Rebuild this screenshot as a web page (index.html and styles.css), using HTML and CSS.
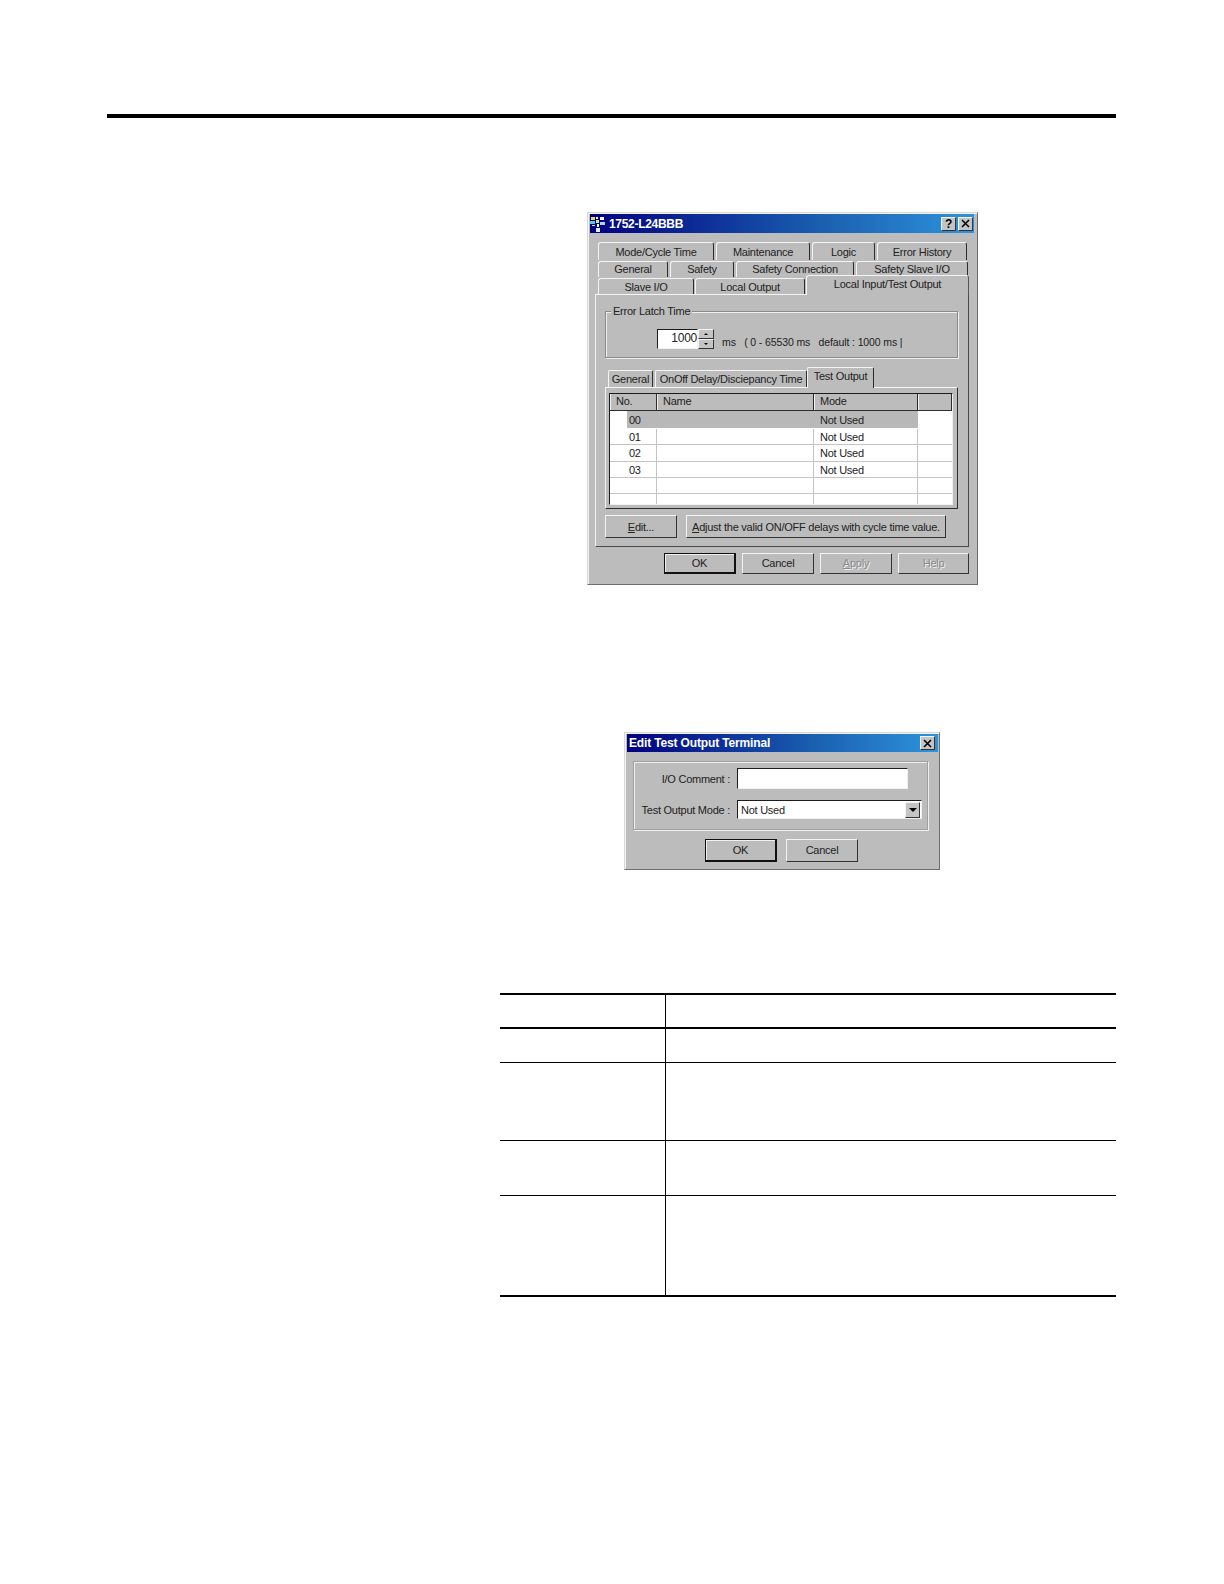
FILE: index.html
```html
<!DOCTYPE html>
<html lang="en">
<head>
<meta charset="utf-8">
<title>Edit Test Output Terminal</title>
<link rel="stylesheet" href="styles.css">
</head>
<body>
<main class="page">
  <div class="rule"></div>

  <section class="dialog dialog-main">
    <header class="titlebar">
      <svg class="app-icon" viewBox="0 0 16 16" width="16" height="16" aria-hidden="true">
        <rect x="1" y="1" width="4" height="3" fill="#e6d84a"/>
        <rect x="6" y="1" width="2" height="2" fill="#ffffff"/>
        <rect x="10" y="1" width="4" height="3" fill="#f2f2f2"/>
        <rect x="0" y="5" width="5" height="3" fill="#58c8e0"/>
        <rect x="6" y="4" width="3" height="3" fill="#d8e880"/>
        <rect x="10" y="6" width="5" height="3" fill="#b8d0e8"/>
        <rect x="2" y="9" width="3" height="1" fill="#e0e0e0"/>
        <rect x="7" y="8" width="2" height="3" fill="#ffffff"/>
        <rect x="6" y="12" width="4" height="4" fill="#e8e8e8"/>
      </svg>
      <h1 class="title title-main">1752-L24BBB</h1>
      <span class="caption-btn caption-help">?</span>
      <span class="caption-btn caption-close">
        <svg viewBox="0 0 9 9" width="9" height="9" aria-hidden="true"><path d="M1 1 L8 8 M8 1 L1 8" stroke="#000" stroke-width="1.6"/></svg>
      </span>
    </header>

    <div class="tabs">
      <div class="tab-row tab-row-a">
        <span class="tab">Mode/Cycle Time</span>
        <span class="tab">Maintenance</span>
        <span class="tab">Logic</span>
        <span class="tab">Error History</span>
      </div>
      <div class="tab-row tab-row-b">
        <span class="tab">General</span>
        <span class="tab">Safety</span>
        <span class="tab">Safety Connection</span>
        <span class="tab">Safety Slave I/O</span>
      </div>
      <div class="tab-row tab-row-c">
        <span class="tab">Slave I/O</span>
        <span class="tab">Local Output</span>
        <span class="tab tab-active">Local Input/Test Output</span>
      </div>
    </div>

    <div class="panel">
      <div class="group group-latch">
        <span class="legend">Error Latch Time</span>
        <div class="spinner">
          <span class="spin-input">1000</span>
          <span class="spin-btns">
            <span class="spin-btn"><i class="arrow-up"></i></span>
            <span class="spin-btn"><i class="arrow-down"></i></span>
          </span>
        </div>
        <span class="range">ms   ( 0 - 65530 ms   default : 1000 ms |</span>
      </div>

      <div class="subtabs">
        <span class="subtab subtab-general">General</span>
        <span class="subtab subtab-delay">OnOff Delay/Disciepancy Time</span>
        <span class="subtab subtab-active">Test Output</span>
      </div>

      <div class="subpanel">
        <div class="list">
          <div class="list-head">
            <span class="hcell">No.</span>
            <span class="hcell">Name</span>
            <span class="hcell">Mode</span>
            <span class="hcell"></span>
          </div>
          <div class="row row-selected row-h18">
            <span class="cell cell-no"><i class="sel-gap"></i>00</span>
            <span class="cell"></span>
            <span class="cell">Not Used</span>
            <span class="cell cell-end"></span>
          </div>
          <div class="row row-h16">
            <span class="cell cell-no"><i class="sel-gap"></i>01</span>
            <span class="cell"></span>
            <span class="cell">Not Used</span>
            <span class="cell cell-end"></span>
          </div>
          <div class="row row-h17">
            <span class="cell cell-no"><i class="sel-gap"></i>02</span>
            <span class="cell"></span>
            <span class="cell">Not Used</span>
            <span class="cell cell-end"></span>
          </div>
          <div class="row row-h16">
            <span class="cell cell-no"><i class="sel-gap"></i>03</span>
            <span class="cell"></span>
            <span class="cell">Not Used</span>
            <span class="cell cell-end"></span>
          </div>
          <div class="row row-h16">
            <span class="cell"></span><span class="cell"></span><span class="cell"></span><span class="cell cell-end"></span>
          </div>
          <div class="row row-last">
            <span class="cell"></span><span class="cell"></span><span class="cell"></span><span class="cell cell-end"></span>
          </div>
        </div>
      </div>

      <div class="panel-actions">
        <span class="btn btn-edit"><span><u>E</u>dit...</span></span>
        <span class="btn btn-adjust"><span><u>A</u>djust the valid ON/OFF delays with cycle time value.</span></span>
      </div>
    </div>

    <div class="dialog-actions">
      <span class="btn btn-default btn-72">OK</span>
      <span class="btn btn-72">Cancel</span>
      <span class="btn btn-72 btn-disabled"><span><u>A</u>pply</span></span>
      <span class="btn btn-71 btn-disabled">Help</span>
    </div>
  </section>

  <section class="dialog dialog-edit">
    <header class="titlebar titlebar-edit">
      <h2 class="title title-edit">Edit Test Output Terminal</h2>
      <span class="caption-btn caption-close">
        <svg viewBox="0 0 9 9" width="9" height="9" aria-hidden="true"><path d="M1 1 L8 8 M8 1 L1 8" stroke="#000" stroke-width="1.6"/></svg>
      </span>
    </header>
    <div class="group group-edit">
      <label class="field-label">I/O Comment :</label>
      <span class="text-input"></span>
      <label class="field-label">Test Output Mode :</label>
      <span class="select">
        <span class="select-value">Not Used</span>
        <span class="select-btn"><i class="arrow-down arrow-big"></i></span>
      </span>
    </div>
    <div class="edit-actions">
      <span class="btn btn-default btn-72 btn-tall">OK</span>
      <span class="btn btn-72 btn-tall">Cancel</span>
    </div>
  </section>

  <table class="data-table">
    <tbody>
      <tr class="tr-head"><td class="td-first"></td><td></td></tr>
      <tr class="tr-1"><td class="td-first"></td><td></td></tr>
      <tr class="tr-2"><td class="td-first"></td><td></td></tr>
      <tr class="tr-3"><td class="td-first"></td><td></td></tr>
      <tr class="tr-4"><td class="td-first"></td><td></td></tr>
    </tbody>
  </table>
</main>
</body>
</html>
```

FILE: styles.css
```css
* { box-sizing: border-box; }

html, body {
  margin: 0;
  padding: 0;
  background: #fff;
}

.page {
  width: 1224px;
  height: 1584px;
  padding-top: 114px;
  overflow: hidden;
  font-family: "Liberation Sans", Arial, sans-serif;
  font-size: 11px;
  letter-spacing: -0.25px;
  color: #222;
}

.rule {
  height: 4px;
  width: 1009px;
  margin-left: 107px;
  background: #000;
}

/* Dialog frames */
.dialog {
  background: #bcbcbc;
  border: 1px solid;
  border-color: #d8d8d8 #6e6e6e #6e6e6e #d8d8d8;
  box-shadow: inset 1px 1px 0 #f2f2f2;
}

.dialog-main {
  width: 391px;
  height: 373px;
  margin: 94px 0 0 587px;
  padding: 1px 3px 0 2px;
}

.dialog-edit {
  width: 316px;
  height: 138px;
  margin: 147px 0 0 624px;
  padding: 1px 0 0 2px;
}

/* Title bars */
.titlebar {
  display: flex;
  align-items: center;
  height: 19px;
  padding-right: 1px;
  background: linear-gradient(90deg, #000080 0%, #1a5fb0 60%, #2e93dc 100%);
  color: #fff;
}

.titlebar-edit {
  height: 18px;
  width: 311px;
  padding-right: 3px;
}

.app-icon {
  flex: none;
  margin-right: 3px;
}

.title {
  flex: 1;
  margin: 0;
  font-size: 12px;
  font-weight: 700;
  line-height: 1;
}

.title-main { letter-spacing: -0.3px; }

.title-edit {
  padding-left: 2px;
  letter-spacing: -0.15px;
}

.caption-btn {
  display: flex;
  align-items: center;
  justify-content: center;
  width: 15px;
  height: 14px;
  background: #c4c4c4;
  border: 1px solid;
  border-color: #f4f4f4 #333 #333 #f4f4f4;
  color: #000;
  font-size: 12px;
  font-weight: 700;
}

.caption-help { margin-right: 2px; }

/* Property page tabs */
.tabs { margin: 9px 0 0 8px; }

.tab-row {
  display: grid;
  column-gap: 2px;
  height: 18px;
}

.tab-row-a {
  grid-template-columns: 116px 94px 63px 90px;
}

.tab-row-b {
  grid-template-columns: 70px 64px 118px 112px;
  height: 16px;
  margin-top: 1px;
}

.tab-row-c {
  grid-template-columns: 96px 110px 163px;
  column-gap: 1px;
  height: 17px;
  margin-top: 1px;
}

.tab {
  display: flex;
  align-items: center;
  justify-content: center;
  background: #bcbcbc;
  border-top: 1px solid #f4f4f4;
  border-left: 1px solid #f4f4f4;
  border-right: 1px solid #2c2c2c;
  border-radius: 3px 3px 0 0;
  white-space: nowrap;
}

.tab-row-b .tab,
.tab-row-c .tab { padding-bottom: 1px; }

.tab-row-c .tab-active {
  position: relative;
  z-index: 2;
  height: 20px;
  margin-top: -3px;
  padding-bottom: 3px;
  border-right-color: #555;
}

/* Main panel */
.panel {
  position: relative;
  z-index: 1;
  width: 374px;
  height: 253px;
  margin: -1px 0 0 5px;
  padding: 16px 10px 0 9px;
  background: #bcbcbc;
  border: 1px solid;
  border-color: #f4f4f4 #4a4a4a #4a4a4a #f4f4f4;
}

.group {
  position: relative;
  border: 1px solid #8a8a8a;
  box-shadow: 1px 1px 0 #f0f0f0, inset 1px 1px 0 #f0f0f0;
}

.group-latch {
  display: flex;
  align-items: flex-start;
  height: 47px;
  padding: 17px 0 0 51px;
}

.legend {
  position: absolute;
  top: -8px;
  left: 5px;
  padding: 0 2px;
  background: #bcbcbc;
  line-height: 14px;
}

.spinner {
  display: flex;
  width: 57px;
  height: 20px;
}

.spin-input {
  flex: 1;
  background: #fff;
  border: 1px solid;
  border-color: #1c1c1c #f0f0f0 #f0f0f0 #1c1c1c;
  text-align: right;
  line-height: 17px;
  font-size: 12px;
}

.spin-btns {
  display: flex;
  flex-direction: column;
  width: 16px;
}

.spin-btn {
  display: flex;
  align-items: center;
  justify-content: center;
  height: 10px;
  background: #c4c4c4;
  border: 1px solid;
  border-color: #f4f4f4 #333 #333 #f4f4f4;
}

.arrow-up, .arrow-down {
  display: block;
  width: 0;
  height: 0;
  border-left: 2px solid transparent;
  border-right: 2px solid transparent;
}

.arrow-up { border-bottom: 2px solid #000; }
.arrow-down { border-top: 2px solid #000; }

.arrow-big {
  border-left-width: 4px;
  border-right-width: 4px;
  border-top-width: 4px;
}

.range {
  margin: 6px 0 0 8px;
  font-size: 10.5px;
  letter-spacing: -0.12px;
  white-space: pre;
  line-height: 14px;
}

/* Inner tabs */
.subtabs {
  display: flex;
  align-items: flex-end;
  height: 20px;
  margin: 9px 0 0 3px;
}

.subtab {
  display: flex;
  align-items: center;
  justify-content: center;
  height: 17px;
  margin-right: 2px;
  padding-bottom: 1px;
  background: #bcbcbc;
  border-top: 1px solid #f4f4f4;
  border-left: 1px solid #f4f4f4;
  border-right: 1px solid #2c2c2c;
  border-radius: 2px 2px 0 0;
  white-space: nowrap;
}

.subtab-general { width: 45px; }

.subtab-delay {
  width: 152px;
  margin-right: 0;
}

.subtab-active {
  position: relative;
  z-index: 2;
  width: 67px;
  height: 21px;
  margin-bottom: -1px;
  padding-bottom: 5px;
}

.subpanel {
  width: 353px;
  height: 122px;
  padding: 5px 0 0 3px;
  border: 1px solid;
  border-color: #f4f4f4 #2c2c2c #2c2c2c #f4f4f4;
}

.list {
  width: 344px;
  height: 112px;
  overflow: hidden;
  background: #fff;
  border: 1px solid;
  border-color: #1c1c1c #f0f0f0 #f0f0f0 #1c1c1c;
}

.list-head, .row {
  display: grid;
  grid-template-columns: 47px 157px 104px 1fr;
}

.list-head {
  height: 17px;
  background: #bcbcbc;
  border-bottom: 1px solid #2c2c2c;
}

.hcell {
  padding-left: 5px;
  border-left: 1px solid #f0f0f0;
  border-right: 1px solid #2c2c2c;
  line-height: 15px;
}

.row { border-bottom: 1px solid #c4c4c4; }
.row-h18 { height: 18px; }
.row-h17 { height: 17px; }
.row-h16 { height: 16px; }
.row-last { height: 12px; border-bottom: 0; }

.cell {
  display: flex;
  align-items: center;
  padding-left: 6px;
  border-right: 1px solid #c4c4c4;
  white-space: nowrap;
}

.cell-no { padding-left: 0; }
.cell-end { border-right: 0; }

.sel-gap {
  display: block;
  flex: none;
  width: 17px;
  height: 100%;
  margin-right: 2px;
  background: #fff;
}

.row-selected {
  background: #b8b8b8;
  border-bottom-color: #fff;
}

.row-selected .cell { border-right-color: #b8b8b8; }
.row-selected .cell-end { background: #fff; }

/* Buttons */
.panel-actions {
  display: flex;
  gap: 9px;
  margin-top: 6px;
}

.btn {
  display: flex;
  align-items: center;
  justify-content: center;
  height: 23px;
  background: #bcbcbc;
  border: 1px solid;
  border-color: #f4f4f4 #333 #333 #f4f4f4;
  white-space: nowrap;
}

.btn-edit { width: 72px; }
.btn-adjust { width: 260px; }
.btn-71 { width: 71px; height: 21px; padding-bottom: 2px; }
.btn-72 { width: 72px; height: 21px; padding-bottom: 2px; }
.btn-tall { height: 23px; }

.btn-default {
  border: 1px solid #111;
  border-width: 1px 2px 2px 1px;
  box-shadow: inset 1px 1px 0 #f0f0f0;
  padding-bottom: 0;
}

.btn-disabled {
  color: #8a8a8a;
  text-shadow: 1px 1px 0 #f0f0f0;
}

.dialog-actions {
  display: flex;
  justify-content: flex-end;
  gap: 6px;
  width: 379px;
  margin-top: 6px;
}

/* Edit dialog */
.group-edit {
  display: grid;
  grid-template-columns: 96px 1fr;
  column-gap: 7px;
  align-items: center;
  align-content: start;
  row-gap: 11px;
  width: 295px;
  height: 69px;
  margin: 9px 0 0 6px;
  padding-top: 6px;
  border-color: #a0a0a0;
}

.field-label {
  padding-top: 1px;
  text-align: right;
  white-space: nowrap;
}

.text-input {
  display: block;
  width: 171px;
  height: 21px;
  background: #fff;
  border: 1px solid;
  border-color: #1c1c1c #f0f0f0 #f0f0f0 #1c1c1c;
}

.select {
  display: flex;
  align-items: center;
  width: 185px;
  height: 19px;
  padding-right: 1px;
  background: #fff;
  border: 1px solid;
  border-color: #1c1c1c #f0f0f0 #f0f0f0 #1c1c1c;
}

.select-value {
  flex: 1;
  padding-left: 3px;
}

.select-btn {
  display: flex;
  align-items: center;
  justify-content: center;
  width: 15px;
  height: 16px;
  background: #c4c4c4;
  border: 1px solid;
  border-color: #f4f4f4 #333 #333 #f4f4f4;
}

.edit-actions {
  display: flex;
  gap: 9px;
  margin: 9px 0 0 78px;
}

/* Ruled table */
.data-table {
  width: 616px;
  margin: 123px 0 0 500px;
  border-collapse: separate;
  border-spacing: 0;
  table-layout: fixed;
  border-top: 2px solid #000;
  border-bottom: 2px solid #000;
}

.data-table td { padding: 0; }
.td-first {
  width: 166px;
  border-right: 1px solid #000;
}

.tr-head td { height: 34px; border-bottom: 2px solid #000; }
.tr-1 td { height: 34px; border-bottom: 1px solid #000; }
.tr-2 td { height: 78px; border-bottom: 1px solid #000; }
.tr-3 td { height: 55px; border-bottom: 1px solid #000; }
.tr-4 td { height: 99px; }
```
